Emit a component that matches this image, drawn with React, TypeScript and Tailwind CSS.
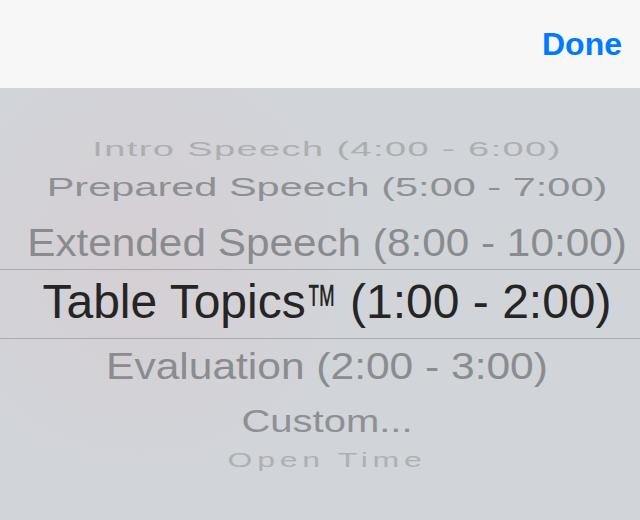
const rows = [
  {
    label: "Intro Speech (4:00 - 6:00)",
    box: "h-[36px]",
    text: "text-[38px] tracking-[1.4px] scale-y-[0.51] text-[#acaeb2]",
  },
  {
    label: "Prepared Speech (5:00 - 7:00)",
    box: "h-[40px]",
    text: "text-[41.5px] scale-y-[0.64] text-[#8e9094]",
  },
  {
    label: "Extended Speech (8:00 - 10:00)",
    box: "h-[62px] pt-[10px]",
    text: "text-[42.3px] scale-y-[0.93] text-[#898b8f]",
  },
];

const below = [
  {
    label: "Evaluation (2:00 - 3:00)",
    box: "h-[56px]",
    text: "text-[42.5px] scale-y-[0.86] text-[#8a8c90]",
  },
  {
    label: "Custom...",
    box: "h-[52px]",
    text: "text-[40px] scale-y-[0.77] text-[#8e9094]",
  },
  {
    label: "Open Time",
    box: "h-[26px]",
    text: "text-[32px] tracking-[4.7px] scale-y-[0.61] text-[#aeb0b4]",
  },
];

const Row = ({ label, box, text }: { label: string; box: string; text: string }) => (
  <div className={`flex items-center justify-center pl-[14px] ${box}`}>
    <span className={`whitespace-nowrap leading-none ${text}`}>{label}</span>
  </div>
);

export default function App() {
  return (
    <div className="flex h-[520px] w-[640px] flex-col overflow-hidden font-['Liberation_Sans',Arial,sans-serif]">
      <div className="flex h-[88px] shrink-0 items-center justify-end bg-[#f7f7f7] pr-[18px]">
        <button className="text-[32px] font-semibold leading-none text-[#007aff]">Done</button>
      </div>

      <div className="flex flex-1 flex-col bg-[#d1d4d9] bg-[radial-gradient(circle_at_22%_40%,#d6cfd4_0%,rgba(209,212,217,0)_38%)]">
        <div className="h-[43px]" />
        {rows.map((r) => (
          <Row key={r.label} {...r} />
        ))}

        <div className="flex h-[70px] items-center justify-center border-y border-[#abacaf] pl-[14px]">
          <span className="whitespace-nowrap text-[48px] leading-none text-[#252525]">
            Table Topics
            <span className="-mr-[25px] inline-block origin-left scale-x-[0.55] align-[-5px] text-[56px]">™</span>
            {" (1:00 - 2:00)"}
          </span>
        </div>

        {below.map((r) => (
          <Row key={r.label} {...r} />
        ))}
      </div>
    </div>
  );
}
